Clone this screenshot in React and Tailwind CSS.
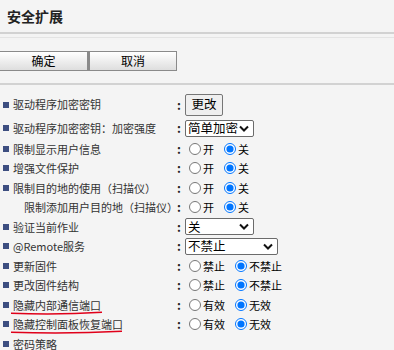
import React from "react";

const font = { fontFamily: '"Noto Sans CJK SC", "Noto Sans", sans-serif' };

function Bullet() {
  return <span className="w-[6px] h-[6px] bg-[#3d4e80] shrink-0" />;
}

function Radio({ name, checked, label }) {
  return (
    <label className="flex items-center ml-[4px]">
      <input
        type="radio"
        name={name}
        defaultChecked={checked}
        className="m-0 w-[12px] h-[12px]"
      />
      <span className="ml-[2px] mr-[6px] text-[11px] text-black whitespace-nowrap">{label}</span>
    </label>
  );
}

function Select({ value, width }) {
  return (
    <div
      className={`flex items-center justify-between h-[17px] border border-[#6b6b6b] rounded-[2px] bg-white pl-[2px] pr-[4px] shrink-0 ${width}`}>
      <span className="text-[12.5px] text-black leading-none whitespace-nowrap">{value}</span>
      <svg className="shrink-0" width="10" height="7" viewBox="0 0 10 7">
        <path d="M1 1.5 L5 5.5 L9 1.5" fill="none" stroke="#111" strokeWidth="2" />
      </svg>
    </div>
  );
}

function Row({ label, indent, h = "h-[19.5px]", children, mark }) {
  return (
    <div className={`flex items-center ${h}`}>
      <div className="w-[177px] shrink-0 flex items-center pl-[3px] gap-[4px]">
        {indent ? <span className="w-[17px] shrink-0" /> : <Bullet />}
        <span className="relative text-[11px] text-[#333] whitespace-nowrap">
          {label}
          {mark && (
            <svg
              className="absolute left-[-3px] top-[14px]"
              width={mark}
              height="5"
              viewBox={`0 0 ${mark} 5`}>
              <path
                d={`M1 2.2 Q ${mark / 2} 4.2 ${mark - 1} 1.2`}
                fill="none"
                stroke="#e0001a"
                strokeWidth="1.6"
              />
            </svg>
          )}
        </span>
      </div>
      {children !== undefined && (
        <>
          <span className="w-[8px] shrink-0 text-[12px] font-bold text-[#222]">:</span>
          <div className="flex items-center">{children}</div>
        </>
      )}
    </div>
  );
}

export default function App() {
  return (
    <div className="w-[394px] h-[350px] bg-[#f4f4f4] overflow-hidden" style={font}>
      <div className="h-[32px] flex items-center pl-[7px]">
        <h1 className="text-[14px] font-bold text-[#222]">安全扩展</h1>
      </div>
      <div className="h-[2px] bg-[#d2d2d2]" />
      <div className="h-[3px]" />
      <div className="h-[1px] bg-[#e4e4e4]" />
      <div className="h-[45px] flex items-center">
        <div className="flex h-[20px] mt-[1px]">
          <button className="w-[88px] h-[20px] border border-[#8a8a8a] border-l-0 bg-gradient-to-b from-white to-[#dedede] text-[12px] text-black">
            确定
          </button>
          <button className="w-[89px] h-[20px] border border-[#8a8a8a] border-l-2 bg-gradient-to-b from-white to-[#dedede] text-[12px] text-black">
            取消
          </button>
        </div>
      </div>
      <div className="h-[2px] bg-[#d2d2d2]" />

      <div className="pt-[7px]">
        <Row label="驱动程序加密密钥" h="h-[25px]">
          <button className="w-[38px] h-[22px] border border-[#767676] rounded-[2px] bg-[#efefef] text-[12.5px] text-black leading-none">
            更改
          </button>
        </Row>
        <Row label="驱动程序加密密钥：加密强度" h="h-[22px]">
          <Select value="简单加密" width="w-[69px]" />
        </Row>
        <Row label="限制显示用户信息">
          <Radio name="r1" label="开" />
          <Radio name="r1" label="关" checked />
        </Row>
        <Row label="增强文件保护">
          <Radio name="r2" label="开" />
          <Radio name="r2" label="关" checked />
        </Row>
        <Row label="限制目的地的使用（扫描仪）">
          <Radio name="r3" label="开" />
          <Radio name="r3" label="关" checked />
        </Row>
        <Row label="限制添加用户目的地（扫描仪）" indent>
          <Radio name="r4" label="开" />
          <Radio name="r4" label="关" checked />
        </Row>
        <Row label="验证当前作业">
          <Select value="关" width="w-[69px]" />
        </Row>
        <Row label="@Remote服务">
          <Select value="不禁止" width="w-[93px]" />
        </Row>
        <Row label="更新固件">
          <Radio name="r5" label="禁止" />
          <Radio name="r5" label="不禁止" checked />
        </Row>
        <Row label="更改固件结构">
          <Radio name="r6" label="禁止" />
          <Radio name="r6" label="不禁止" checked />
        </Row>
        <Row label="隐藏内部通信端口" mark={93}>
          <Radio name="r7" label="有效" />
          <Radio name="r7" label="无效" checked />
        </Row>
        <Row label="隐藏控制面板恢复端口" mark={113}>
          <Radio name="r8" label="有效" />
          <Radio name="r8" label="无效" checked />
        </Row>
        <Row label="密码策略" />
      </div>
    </div>
  );
}
